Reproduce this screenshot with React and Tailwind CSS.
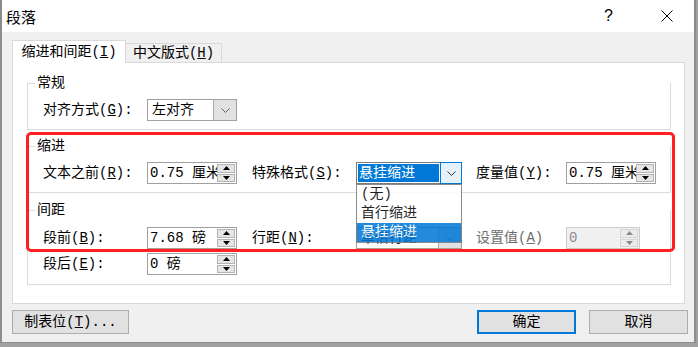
import React from "react";

const Chevron = ({ color = "#555" }) => (
  <svg width="9" height="5" viewBox="0 0 9 5">
    <path d="M0.5 0.5 L4.5 4.5 L8.5 0.5" fill="none" stroke={color} strokeWidth="1" />
  </svg>
);

const Tri = ({ up, color = "#000" }) => (
  <svg width="7" height="4" viewBox="0 0 7 4">
    <path d={up ? "M0 4 L3.5 0 L7 4 Z" : "M0 0 L7 0 L3.5 4 Z"} fill={color} />
  </svg>
);

const Label = ({ className = "", children }) => (
  <div className={`shrink-0 whitespace-nowrap leading-[22px] ${className}`}>{children}</div>
);

const Spin = ({ value, disabled, className = "" }) => (
  <div
    className={`flex h-[22px] shrink-0 border ${
      disabled ? "border-[#cccccc] bg-[#f0f0f0] text-[#8d8d8d]" : "border-[#a0a0a0] bg-white"
    } ${className}`}
  >
    <div className="flex-1 overflow-hidden whitespace-nowrap pl-[2px] leading-[20px]">{value}</div>
    <div className="flex w-[19px] flex-col gap-px py-px pr-px">
      <div
        className={`flex h-[9px] items-center justify-center border ${
          disabled ? "border-[#d6d6d6] bg-[#ececec]" : "border-[#b4b4b4] bg-[#e5e5e5]"
        }`}
      >
        <Tri up color={disabled ? "#8a8a8a" : "#000"} />
      </div>
      <div
        className={`flex h-[9px] items-center justify-center border ${
          disabled ? "border-[#d6d6d6] bg-[#ececec]" : "border-[#b4b4b4] bg-[#e5e5e5]"
        }`}
      >
        <Tri color={disabled ? "#8a8a8a" : "#000"} />
      </div>
    </div>
  </div>
);

const Combo = ({ value, className = "" }) => (
  <div className={`flex h-[22px] shrink-0 border border-[#a0a0a0] bg-white ${className}`}>
    <div className="flex-1 overflow-hidden whitespace-nowrap pl-[4px] leading-[20px]">{value}</div>
    <div className="flex w-[23px] items-center justify-center border-l border-[#adadad] bg-[#e1e1e1]">
      <Chevron color="#606060" />
    </div>
  </div>
);

const Group = ({ title, className = "", children }) => (
  <div className={`flex flex-col border-x border-b border-[#dcdcdc] ${className}`}>
    <div className="-mt-[9px] flex h-[18px] items-center leading-[18px]">
      <span className="h-px w-[7px] bg-[#dcdcdc]" />
      <span className="px-[2px] bg-white">{title}</span>
    </div>
    {children}
  </div>
);

const Btn = ({ children, primary, className = "" }) => (
  <div
    className={`flex h-[24px] items-center justify-center bg-[#e1e1e1] ${
      primary ? "border-2 border-[#0078d7]" : "border border-[#adadad]"
    } ${className}`}
  >
    {children}
  </div>
);

export default function App() {
  return (
    <div className="relative h-[347px] w-[698px] overflow-hidden bg-[#a0a0a0] font-['Liberation_Mono','Noto_Sans_CJK_SC',monospace] text-[14px] text-black">
      <div className="flex h-[343px] w-[696px] flex-col border-x-2 border-b border-[#8c8c8c] bg-[#f0f0f0]">
        {/* Title bar */}
        <div className="flex h-[32px] shrink-0 items-center bg-white pl-[4px] pr-[21px]">
          <span className="font-['Noto_Sans_CJK_SC',sans-serif] text-[15px] leading-none">段落</span>
          <span className="ml-auto font-['Liberation_Sans',sans-serif] text-[16px] leading-none">?</span>
          <svg className="ml-[48px]" width="12" height="12" viewBox="0 0 12 12">
            <path d="M0.5 0.5 L11.5 11.5 M11.5 0.5 L0.5 11.5" stroke="#000" strokeWidth="1" />
          </svg>
        </div>

        {/* Tabs */}
        <div className="mt-[8px] flex items-end pl-[10px]">
          <div className="relative z-10 -mb-px flex h-[23px] w-[114px] items-center justify-center border-x border-t border-[#d9d9d9] bg-white leading-none">
            缩进和间距(<span className="underline">I</span>)
          </div>
          <div className="flex h-[19px] w-[96px] items-center justify-center border-r border-t border-[#d9d9d9] bg-[#f0f0f0] leading-none">
            中文版式(<span className="underline">H</span>)
          </div>
        </div>

        {/* Panel */}
        <div className="ml-[10px] flex w-[673px] flex-col border border-[#d9d9d9] bg-white pb-[18px] pl-[14px] pr-[13px] pt-[20px]">
          <Group title="常规">
            <div className="mt-[7px] flex items-center pb-[8px] pl-[15px]">
              <Label className="w-[104px]">
                对齐方式(<span className="underline">G</span>):
              </Label>
              <Combo value="左对齐" className="w-[90px]" />
            </div>
          </Group>

          <Group title="缩进" className="mt-[16px]">
            <div className="mt-[7px] flex items-center pb-[8px] pl-[15px]">
              <Label className="w-[104px]">
                文本之前(<span className="underline">R</span>):
              </Label>
              <Spin value="0.75 厘米" className="w-[90px]" />
              <Label className="ml-[15px] w-[104px]">
                特殊格式(<span className="underline">S</span>):
              </Label>
              <div className="relative w-[106px] shrink-0">
                <div className="flex h-[22px] border border-[#7a7a7a] bg-white">
                  <div className="flex-1 py-[1px] pl-[1px] pr-[1px]">
                    <div className="h-full bg-[#0078d7] pl-[1px] leading-[18px] text-white">悬挂缩进</div>
                  </div>
                  <div className="-my-px -mr-px flex w-[22px] items-center justify-center border border-[#0078d7] bg-[#e5f1fb]">
                    <Chevron color="#333" />
                  </div>
                </div>
                <div className="absolute left-0 top-[22px] z-20 w-[106px] border border-[#7a7a7a] bg-white opacity-[0.86]">
                  <div className="h-[19px] pl-[4px] leading-[19px]">(无)</div>
                  <div className="h-[19px] pl-[4px] leading-[19px]">首行缩进</div>
                  <div className="h-[19px] bg-[#0078d7] pl-[4px] leading-[19px] text-white">悬挂缩进</div>
                </div>
              </div>
              <Label className="ml-[14px] w-[90px]">
                度量值(<span className="underline">Y</span>):
              </Label>
              <Spin value="0.75 厘米" className="w-[90px]" />
            </div>
          </Group>

          <Group title="间距" className="mt-[17px]">
            <div className="mt-[8px] flex items-center pl-[15px]">
              <Label className="w-[104px]">
                段前(<span className="underline">B</span>):
              </Label>
              <Spin value="7.68 磅" className="w-[90px]" />
              <Label className="ml-[15px] w-[104px]">
                行距(<span className="underline">N</span>):
              </Label>
              <Combo value="单倍行距" className="w-[106px]" />
              <Label className="ml-[14px] w-[90px] text-[#6d6d6d]">
                设置值(<span className="underline">A</span>)
              </Label>
              <Spin value="0" disabled className="w-[74px]" />
            </div>
            <div className="mt-[4px] flex items-center pb-[9px] pl-[15px]">
              <Label className="w-[104px]">
                段后(<span className="underline">E</span>):
              </Label>
              <Spin value="0 磅" className="w-[90px]" />
            </div>
          </Group>
        </div>

        {/* Buttons */}
        <div className="mt-[6px] flex items-center pl-[10px] pr-[6px]">
          <Btn className="w-[117px]">
            制表位(<span className="underline">T</span>)...
          </Btn>
          <Btn primary className="ml-auto w-[99px]">
            确定
          </Btn>
          <Btn className="ml-[13px] w-[99px]">取消</Btn>
        </div>
      </div>

      {/* Annotation */}
      <div className="pointer-events-none absolute left-[26px] top-[132px] z-30 h-[120px] w-[649px] rounded-[5px] border-[3px] border-[#ff2020]" />
    </div>
  );
}
